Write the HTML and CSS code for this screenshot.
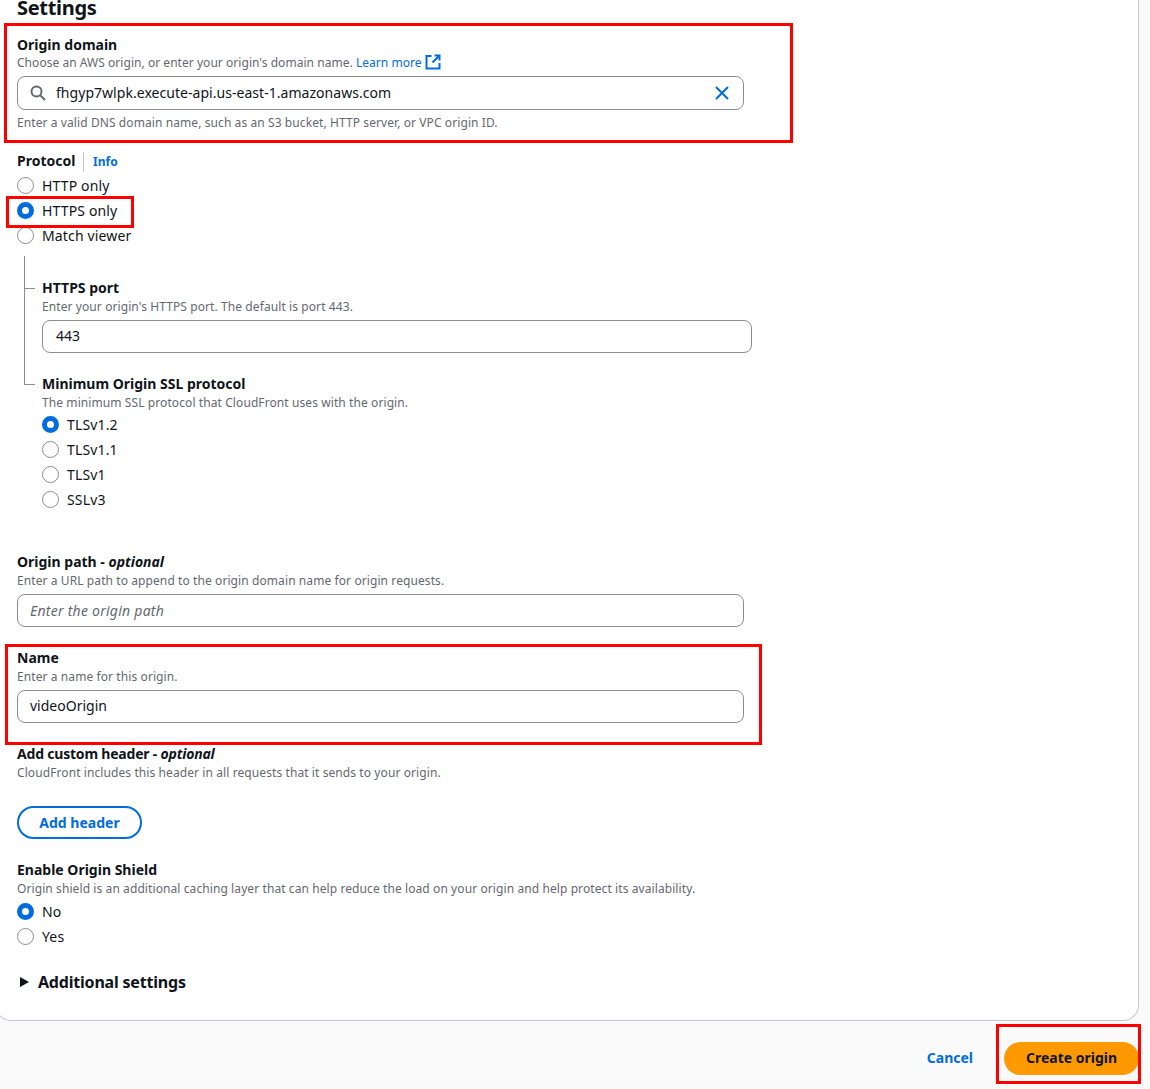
FILE: index.html
```html
<!DOCTYPE html>
<html lang="en">
<head>
    <meta charset="UTF-8">
    <meta name="viewport" content="width=device-width, initial-scale=1.0">
    <link rel="stylesheet" href="styles.css">
    <title>Create origin</title>
</head>
<body>
    <div class="page">
        <div class="card">
            <h2 class="card-title">Settings</h2>

            <div class="field-domain">
                <div class="label">Origin domain</div>
                <div class="desc-domain">Choose an AWS origin, or enter your origin's domain name. <a class="link" href="#">Learn more</a>
                    <svg class="external-icon" width="16" height="16" viewBox="0 0 16 16" fill="none" stroke="#006ce0" stroke-width="2">
                        <path d="M6.5 2H1.5V14.5H14.5V9"/>
                        <path d="M9.5 1.5H14.5V6.5"/>
                        <path d="M14.5 1.5L7.5 8.5"/>
                    </svg>
                </div>
                <div class="search-box">
                    <svg class="search-icon" width="16" height="16" viewBox="0 0 16 16" fill="none" stroke="#656871" stroke-width="2">
                        <circle cx="6.5" cy="6.5" r="5"/>
                        <path d="M10.5 10.5L15 15"/>
                    </svg>
                    <span class="search-value">fhgyp7wlpk.execute-api.us-east-1.amazonaws.com</span>
                    <svg class="clear-icon" width="16" height="16" viewBox="0 0 16 16" fill="none" stroke="#006ce0" stroke-width="2">
                        <path d="M2 2L14 14M14 2L2 14"/>
                    </svg>
                </div>
                <div class="hint">Enter a valid DNS domain name, such as an S3 bucket, HTTP server, or VPC origin ID.</div>
            </div>

            <div class="field-protocol">
                <div class="label label-protocol">Protocol <a class="info-link" href="#">Info</a></div>
                <div class="radio-row"><span class="radio"></span>HTTP only</div>
                <div class="radio-row"><span class="radio checked"></span>HTTPS only</div>
                <div class="radio-row"><span class="radio"></span>Match viewer</div>
            </div>

            <div class="tree">
                <div class="tree-item">
                    <div class="label">HTTPS port</div>
                    <div class="desc">Enter your origin's HTTPS port. The default is port 443.</div>
                    <div class="input input-wide">443</div>
                </div>
                <div class="tree-item tree-item-last">
                    <div class="label">Minimum Origin SSL protocol</div>
                    <div class="desc">The minimum SSL protocol that CloudFront uses with the origin.</div>
                    <div class="radio-row"><span class="radio checked"></span>TLSv1.2</div>
                    <div class="radio-row"><span class="radio"></span>TLSv1.1</div>
                    <div class="radio-row"><span class="radio"></span>TLSv1</div>
                    <div class="radio-row"><span class="radio"></span>SSLv3</div>
                </div>
            </div>

            <div class="field-path">
                <div class="label">Origin path - <em>optional</em></div>
                <div class="desc">Enter a URL path to append to the origin domain name for origin requests.</div>
                <div class="input placeholder">Enter the origin path</div>
            </div>

            <div class="field-next">
                <div class="label">Name</div>
                <div class="desc">Enter a name for this origin.</div>
                <div class="input">videoOrigin</div>
            </div>

            <div class="field-next">
                <div class="label label-tight">Add custom header - <em>optional</em></div>
                <div class="desc">CloudFront includes this header in all requests that it sends to your origin.</div>
                <button class="btn-outline">Add header</button>
            </div>

            <div class="field-next">
                <div class="label">Enable Origin Shield</div>
                <div class="desc desc-radios">Origin shield is an additional caching layer that can help reduce the load on your origin and help protect its availability.</div>
                <div class="radio-row"><span class="radio checked"></span>No</div>
                <div class="radio-row"><span class="radio"></span>Yes</div>
            </div>

            <div class="expander">
                <span class="caret"></span>
                <span class="expander-title">Additional settings</span>
            </div>
        </div>

        <div class="actions">
            <a class="cancel-link" href="#">Cancel</a>
            <button class="btn-primary">Create origin</button>
        </div>

        <!-- red boxes drawn on top of the screenshot -->
        <div class="mark mark-domain"></div>
        <div class="mark mark-https"></div>
        <div class="mark mark-name"></div>
        <div class="mark mark-create"></div>
    </div>
</body>
</html>
```

FILE: styles.css
```css
html, body {
    margin: 0;
    padding: 0;
    height: 1089px;
    overflow: hidden;
    background: #fff;
}

body {
    font-family: "Noto Sans", "Open Sans", sans-serif;
    font-size: 14px;
    color: #0f141a;
}

.page {
    position: relative;
    height: 1129px;
    margin-top: -40px;
    background: #fafafa;
}

.card {
    box-sizing: border-box;
    width: 1144px;
    height: 1061px;
    margin-left: -5px;
    padding: 36px 0 0 21px;
    background: #fff;
    border: 1px solid #c6c6cd;
    border-top: none;
    border-radius: 0 0 16px 16px;
}

.card-title {
    margin: 0;
    font-size: 20px;
    line-height: 24px;
    font-weight: 700;
    letter-spacing: -0.3px;
}

.field-domain {
    margin-top: 16px;
}

.field-protocol {
    margin-top: 20px;
}

.field-path {
    margin-top: 41px;
}

.field-next {
    margin-top: 22px;
}

.label {
    font-weight: 700;
    font-size: 14px;
    line-height: 18px;
}

.label-protocol {
    margin-bottom: 1px;
}

.label-tight {
    letter-spacing: -0.2px;
}

.label em {
    font-style: italic;
}

.desc {
    margin-top: 1px;
    font-size: 12px;
    line-height: 18px;
    letter-spacing: 0.09px;
    color: #656871;
}

.desc-domain {
    font-size: 12px;
    line-height: 18px;
    letter-spacing: 0.04px;
    color: #656871;
}

.desc-radios {
    margin-bottom: 1px;
}

.hint {
    margin-top: 4px;
    font-size: 12px;
    line-height: 18px;
    letter-spacing: 0.09px;
    color: #656871;
}

.link {
    color: #006ce0;
    text-decoration: none;
}

.external-icon {
    vertical-align: -3px;
}

.info-link {
    display: inline-block;
    margin-left: 4px;
    padding-left: 9px;
    border-left: 1px solid #c6c6cd;
    font-size: 12px;
    line-height: 20px;
    color: #006ce0;
    text-decoration: none;
}

.search-box {
    display: flex;
    align-items: center;
    box-sizing: border-box;
    width: 727px;
    height: 34px;
    margin-top: 4px;
    padding: 0 13px 0 12px;
    border: 1px solid #8c8c94;
    border-radius: 8px;
}

.search-icon {
    flex: none;
}

.search-value {
    flex: 1;
    margin: 0 0 2px 10px;
    letter-spacing: 0.04px;
}

.input {
    box-sizing: border-box;
    width: 727px;
    height: 33px;
    margin-top: 4px;
    padding: 0 12px;
    border: 1px solid #8c8c94;
    border-radius: 8px;
    line-height: 29px;
}

.input-wide {
    width: 710px;
    padding: 0 13px;
}

.placeholder {
    font-style: italic;
    line-height: 31px;
    letter-spacing: 0.25px;
    color: #656871;
}

.radio-row {
    display: flex;
    align-items: center;
    height: 25px;
    letter-spacing: 0.15px;
}

.radio {
    box-sizing: border-box;
    flex: none;
    width: 17px;
    height: 17px;
    margin-right: 8px;
    border: 1px solid #8c8c94;
    border-radius: 50%;
    background: #fff;
}

.radio.checked {
    border: 5px solid #006ce0;
}

.tree {
    margin: 8px 0 0 7px;
    padding: 23px 0 0 18px;
}

.tree-item {
    position: relative;
}

/* branch into each nested field */
.tree-item::before {
    content: "";
    position: absolute;
    left: -18px;
    top: 9px;
    width: 11px;
    height: 1px;
    background: #8c8c94;
}

/* trunk on the left */
.tree-item::after {
    content: "";
    position: absolute;
    left: -18px;
    top: -23px;
    bottom: 0;
    width: 1px;
    background: #8c8c94;
}

.tree-item-last {
    margin-top: 22px;
}

.tree-item-last::after {
    top: -22px;
    bottom: auto;
    height: 32px;
}

.btn-outline {
    display: block;
    box-sizing: border-box;
    width: 125px;
    height: 33px;
    margin-top: 24px;
    padding: 0;
    background: #fff;
    border: 2px solid #006ce0;
    border-radius: 20px;
    font: 700 14px "Noto Sans", "Open Sans", sans-serif;
    color: #006ce0;
}

.expander {
    display: flex;
    align-items: center;
    height: 24px;
    margin-top: 21px;
}

.caret {
    width: 0;
    height: 0;
    margin: 0 9px 0 3px;
    border-left: 9px solid #0f141a;
    border-top: 5.5px solid transparent;
    border-bottom: 5.5px solid transparent;
}

.expander-title {
    font-size: 16px;
    font-weight: 700;
    letter-spacing: -0.2px;
}

.actions {
    display: flex;
    justify-content: flex-end;
    align-items: center;
    gap: 31px;
    width: 1139px;
    margin-top: 21px;
}

.cancel-link {
    margin-bottom: 2px;
    font-weight: 700;
    color: #006ce0;
    text-decoration: none;
}

.btn-primary {
    box-sizing: border-box;
    width: 135px;
    height: 33px;
    padding: 0 0 2px;
    background: #ff9900;
    border: none;
    border-radius: 20px;
    font: 700 14px "Noto Sans", "Open Sans", sans-serif;
    color: #0f141a;
}

.mark {
    position: absolute;
    box-sizing: border-box;
    border: 3px solid #ff0000;
}

.mark-domain {
    left: 4px;
    top: 63px;
    width: 789px;
    height: 120px;
}

.mark-https {
    left: 6px;
    top: 236px;
    width: 128px;
    height: 32px;
}

.mark-name {
    left: 5px;
    top: 684px;
    width: 757px;
    height: 101px;
}

.mark-create {
    left: 996px;
    top: 1064px;
    width: 145px;
    height: 60px;
}
```
